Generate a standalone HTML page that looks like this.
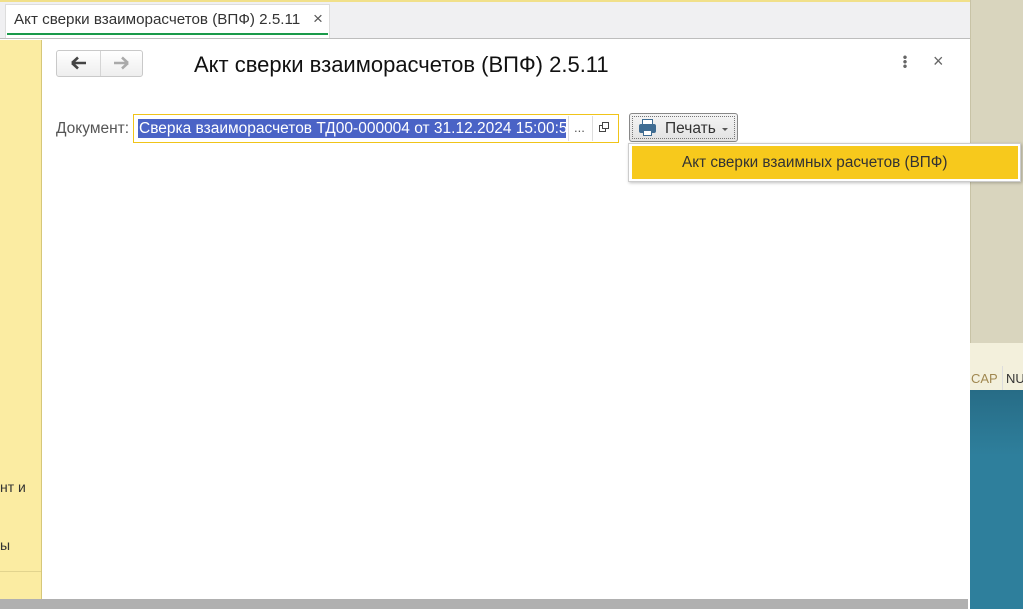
<!DOCTYPE html>
<html><head><meta charset="utf-8"><style>
*{margin:0;padding:0;box-sizing:border-box}
body{width:1023px;height:609px;overflow:hidden;position:relative;font-family:"Liberation Sans",sans-serif;background:#fff}
div,svg{position:absolute}
</style></head><body>
<div style="left:0;top:0;width:970px;height:2px;background:#f1e08a"></div>
<div style="left:0;top:2px;width:970px;height:37px;background:#f0f0f2;border-bottom:1px solid #bdbdbd"></div>
<div style="left:5px;top:4px;width:325px;height:34px;background:#fff;border:1px solid #ddd;border-bottom:none"></div>
<div style="left:7px;top:33px;width:321px;height:2px;background:#1a9a4a"></div>
<div style="left:14px;top:11px;font-size:15.2px;color:#333;white-space:nowrap">Акт сверки взаиморасчетов (ВПФ) 2.5.11</div>
<div style="left:313px;top:9px;font-size:17px;color:#555">×</div>
<div style="left:0;top:40px;width:42px;height:559px;background:#fbeca2;border-right:1px solid #d6c77a"></div>
<div style="left:0;top:571px;width:41px;height:1px;background:#e2d48e"></div>
<div style="left:0;top:479px;font-size:14px;color:#333">нт и</div>
<div style="left:0;top:537px;font-size:14px;color:#333">ы</div>
<div style="left:970px;top:0;width:53px;height:343px;background:#d9d5be;border-left:1px solid #c8c3a6"></div>
<div style="left:970px;top:343px;width:53px;height:47px;background:#f3f0dc"></div>
<div style="left:971px;top:371px;font-size:13px;color:#a08850">CAP</div>
<div style="left:1002px;top:366px;width:22px;height:24px;border-left:1px solid #ddd;font-size:13px;color:#333;padding:5px 0 0 3px">NU</div>
<div style="left:970px;top:390px;width:53px;height:219px;background:linear-gradient(#276c86,#2e7f9c 30%,#2e7f9c)"></div>
<div style="left:0;top:599px;width:968px;height:10px;background:#b0b0b0"></div>
<div style="left:56px;top:50px;width:87px;height:27px;border:1px solid #c9c9c9;border-radius:3px;background:linear-gradient(#fff,#eee)"></div>
<div style="left:100px;top:51px;width:1px;height:25px;background:#d5d5d5"></div>
<svg style="left:70px;top:56px" width="18" height="14" viewBox="0 0 18 14"><path d="M2 7H16M2 7L8 1.5M2 7L8 12.5" stroke="#444" stroke-width="2.6" fill="none"/></svg>
<svg style="left:112px;top:56px" width="18" height="14" viewBox="0 0 18 14"><path d="M16 7H2M16 7L10 1.5M16 7L10 12.5" stroke="#aaa" stroke-width="2.6" fill="none"/></svg>
<div style="left:194px;top:52px;font-size:22px;color:#111;white-space:nowrap">Акт сверки взаиморасчетов (ВПФ) 2.5.11</div>
<div style="left:903px;top:55px;width:4px;height:14px;background:radial-gradient(circle,#666 1.5px,transparent 2px) 0 0/4px 4.5px"></div>
<div style="left:933px;top:51px;font-size:18px;color:#666">×</div>
<div style="left:56px;top:120px;font-size:15.5px;color:#555">Документ:</div>
<div style="left:133px;top:114px;width:486px;height:29px;border:1px solid #f0c419;background:#fff"></div>
<div style="left:138px;top:119px;width:428px;height:19px;background:#4a63c6"></div>
<div style="left:139px;top:120px;width:427px;font-size:15.5px;color:#fff;white-space:nowrap;overflow:hidden">Сверка взаиморасчетов ТД00-000004 от 31.12.2024 15:00:5</div>
<div style="left:568px;top:116px;width:1px;height:25px;background:#ddd"></div>
<div style="left:592px;top:116px;width:1px;height:25px;background:#ddd"></div>
<div style="left:574px;top:120px;font-size:13px;color:#555">...</div>
<div style="left:599px;top:125px;width:7px;height:7px;border:1px solid #444"></div>
<div style="left:602px;top:122px;width:7px;height:7px;border:1px solid #444;background:#fff"></div>
<div style="left:629px;top:113px;width:109px;height:29px;border:1px solid #888;border-radius:3px;background:linear-gradient(#f4f4f4,#e2e2e2)"></div>
<div style="left:632px;top:116px;width:103px;height:23px;border:1px dotted #777"></div>
<div style="left:639px;top:124px;width:17px;height:9px;background:#3f6c92;border-radius:2px"></div>
<div style="left:642px;top:119px;width:11px;height:6px;border:1px solid #3f6c92;background:#fff"></div>
<div style="left:643px;top:130px;width:9px;height:6px;background:#fff;border:1px solid #3f6c92"></div>
<div style="left:665px;top:120px;font-size:15.5px;color:#333">Печать</div>
<div style="left:722px;top:128px;border:3px solid transparent;border-top:3px solid #555"></div>
<div style="left:628px;top:143px;width:393px;height:39px;background:#fff;border:1px solid #ccc;box-shadow:1px 1px 3px rgba(0,0,0,.25)"></div>
<div style="left:632px;top:146px;width:386px;height:33px;background:#f7c91c"></div>
<div style="left:682px;top:154px;font-size:15.3px;color:#333;white-space:nowrap">Акт сверки взаимных расчетов (ВПФ)</div>
</body></html>
